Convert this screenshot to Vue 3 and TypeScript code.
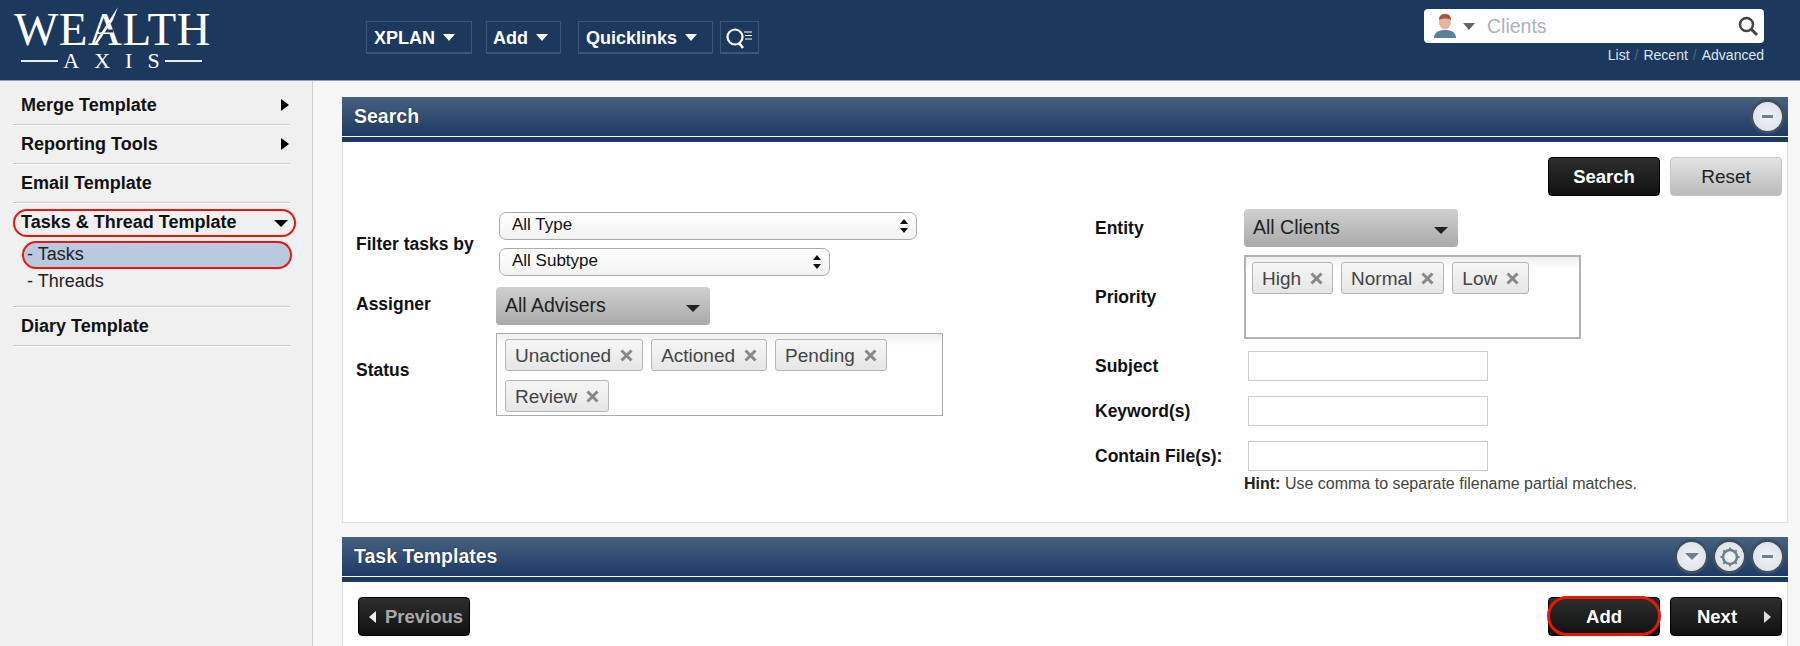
<script setup lang="ts">
const navItems = ['XPLAN', 'Add', 'Quicklinks']
const statusTags = ['Unactioned', 'Actioned', 'Pending', 'Review']
const priorityTags = ['High', 'Normal', 'Low']
</script>

<template>
  <div class="page">
    <header class="topbar">
      <div class="logo">
        <div class="logo-word">WEALTH</div>
        <svg class="logo-slash" width="60" height="50" viewBox="0 0 60 50">
          <path d="M7 41L34 2" stroke="#1c385c" stroke-width="0" fill="none" />
          <path d="M14 31h14" stroke="#1c385c" stroke-width="3" />
          <path d="M9 44L33 7l-5 13L12 44z" fill="#fff" />
        </svg>
        <div class="logo-sub"><i></i><span>AXIS</span><i></i></div>
      </div>
      <nav class="nav">
        <div v-for="n in navItems" :key="n" class="nav-btn" :class="'nav-' + n.toLowerCase()">
          {{ n }}<b class="caret-white"></b>
        </div>
        <div class="nav-icon">
          <svg width="30" height="26" viewBox="0 0 30 26" fill="none" stroke="#fff">
            <circle cx="10" cy="12" r="7.5" stroke-width="2.200" />
            <path d="M14 18l4 5" stroke-width="2.500" />
            <path d="M19 7h8M20 10.500h7M20 14h7" stroke-width="1" />
          </svg>
        </div>
      </nav>
      <div class="client-search">
        <div class="client-box">
          <svg class="person" width="24" height="26" viewBox="0 0 24 26">
            <path d="M1 25c0-6 5-8 11-8s11 2 11 8z" fill="#5c7f9e" />
            <ellipse cx="12" cy="9" rx="6" ry="7.500" fill="#e3b79b" />
            <path d="M6 7c0-5 3-6 6-6s6 1 6 6c-3-2-9-2-12 0z" fill="#a8553a" />
          </svg>
          <b class="caret-grey"></b>
          <span class="client-ph">Clients</span>
          <svg class="mag" width="22" height="22" viewBox="0 0 22 22" fill="none" stroke="#444">
            <circle cx="9.500" cy="9.500" r="6.500" stroke-width="2.500" />
            <path d="M14 14l6 6" stroke-width="3" />
          </svg>
        </div>
        <div class="client-links">
          <span>List</span><em>/</em><span>Recent</span><em>/</em><span>Advanced</span>
        </div>
      </div>
    </header>

    <div class="layout">
      <aside class="sidebar">
        <div class="side-item">Merge Template<b class="arrow-right"></b></div>
        <div class="side-item">Reporting Tools<b class="arrow-right"></b></div>
        <div class="side-item">Email Template</div>
        <div class="side-group">
          <div class="side-head">Tasks &amp; Thread Template<b class="arrow-down"></b></div>
          <div class="side-sub active">- Tasks</div>
          <div class="side-sub">- Threads</div>
        </div>
        <div class="side-item">Diary Template</div>
      </aside>

      <main class="content">
        <section class="panel">
          <div class="panel-head">
            <h2>Search</h2>
            <div class="round-btns"><span class="round"><i class="minus"></i></span></div>
          </div>
          <div class="panel-body">
            <div class="actions">
              <button class="btn dark">Search</button>
              <button class="btn light">Reset</button>
            </div>
            <div class="form">
              <div class="col-left">
                <div class="row filter-row">
                  <label>Filter tasks by</label>
                  <div class="selects">
                    <div class="native-select type-select">All Type<b class="updown"></b></div>
                    <div class="native-select subtype-select">All Subtype<b class="updown"></b></div>
                  </div>
                </div>
                <div class="row assigner-row">
                  <label>Assigner</label>
                  <div class="drop">All Advisers<b class="arrow-down small"></b></div>
                </div>
                <div class="row status-row">
                  <label>Status</label>
                  <div class="tagbox status-box">
                    <span v-for="t in statusTags" :key="t" class="tag">{{ t }}
                      <svg width="13" height="13" viewBox="0 0 13 13" stroke="#888" stroke-width="3"><path d="M1.500 1.500l10 10M11.500 1.500l-10 10" /></svg>
                    </span>
                  </div>
                </div>
              </div>
              <div class="col-right">
                <div class="row">
                  <label class="entity-label">Entity</label>
                  <div class="drop">All Clients<b class="arrow-down small"></b></div>
                </div>
                <div class="row priority-row">
                  <label>Priority</label>
                  <div class="tagbox priority-box">
                    <span v-for="t in priorityTags" :key="t" class="tag">{{ t }}
                      <svg width="13" height="13" viewBox="0 0 13 13" stroke="#888" stroke-width="3"><path d="M1.500 1.500l10 10M11.500 1.500l-10 10" /></svg>
                    </span>
                  </div>
                </div>
                <div class="row text-row subject-row">
                  <label>Subject</label>
                  <input type="text" />
                </div>
                <div class="row text-row keyword-row">
                  <label>Keyword(s)</label>
                  <input type="text" />
                </div>
                <div class="row text-row file-row">
                  <label>Contain File(s):</label>
                  <input type="text" />
                </div>
                <div class="hint"><b>Hint:</b> Use comma to separate filename partial matches.</div>
              </div>
            </div>
          </div>
        </section>

        <section class="panel second">
          <div class="panel-head">
            <h2>Task Templates</h2>
            <div class="round-btns">
              <span class="round"><i class="tri"></i></span>
              <span class="round">
                <svg width="22" height="22" viewBox="0 0 22 22" fill="none" stroke="#6f7f90" stroke-width="2.500">
                  <circle cx="11" cy="11" r="7" />
                  <path d="M11 1.500v2M11 18.500v2M1.500 11h2M18.500 11h2M4.300 4.300l1.400 1.400M16.300 16.300l1.400 1.400M4.300 17.700l1.400-1.400M16.300 5.700l1.400-1.400" stroke-width="2" />
                </svg>
              </span>
              <span class="round"><i class="minus"></i></span>
            </div>
          </div>
          <div class="panel-body pager">
            <button class="btn dark prev"><b class="tri-left"></b><span>Previous</span></button>
            <div class="pager-right">
              <button class="btn dark add-btn">Add</button>
              <button class="btn dark next">Next<b class="tri-right"></b></button>
            </div>
          </div>
        </section>
      </main>
    </div>
  </div>
</template>

<style>
html, body { margin: 0; background: #f5f5f5; }
</style>

<style scoped>
.page {
  width: 1800px;
  height: 646px;
  overflow: hidden;
  font-family: "Liberation Sans", Arial, sans-serif;
  color: #111;
  background: #f6f6f6;
}

/* top bar */
.topbar {
  height: 80px;
  background: #1c385c;
  border-bottom: 1px solid #8fa0b3;
  display: flex;
  position: relative;
}
.logo { width: 366px; padding: 9px 0 0 14px; box-sizing: border-box; color: #fff; font-family: "Liberation Serif", serif; position: relative; }
.logo-word { font-size: 47px; line-height: 40px; letter-spacing: 0.5px; font-weight: normal; }
.logo-slash { position: absolute; left: 85px; top: 0; }
.logo-sub { display: flex; align-items: center; gap: 5px; width: 181px; margin-left: 7px; margin-top: 1px; }
.logo-sub i { flex: 1; height: 2px; background: #e8ecf1; }
.logo-sub span { font-size: 22px; line-height: 22px; letter-spacing: 15px; margin-right: -15px; }
.nav { display: flex; padding-top: 21px; height: 33px; }
.nav-btn {
  height: 33px;
  box-sizing: border-box;
  border: 1px solid #3c5679;
  border-bottom-width: 2px;
  color: #fff;
  font-weight: bold;
  font-size: 18px;
  line-height: 30px;
  padding: 1px 7px 0;
  display: flex;
  align-items: center;
  white-space: nowrap;
}
.nav-xplan { width: 106px; }
.nav-add { width: 75px; margin-left: 14px; padding-left: 6px; }
.nav-quicklinks { width: 135px; margin-left: 17px; }
.caret-white { border: 6px solid transparent; border-top: 7px solid #fff; border-bottom: 0; margin-left: 8px; }
.nav-icon { width: 39px; height: 33px; margin-left: 7px; box-sizing: border-box; border: 1px solid #3c5679; border-bottom-width: 2px; padding: 3px 0 0 4px; }

.client-search { position: absolute; right: 36px; top: 9px; width: 340px; }
.client-box {
  height: 34px;
  box-sizing: border-box;
  background: #fff;
  border-radius: 4px;
  display: flex;
  align-items: center;
  padding: 0 5px 0 9px;
}
.caret-grey { border: 6px solid transparent; border-top: 7px solid #666; border-bottom: 0; margin: 0 12px 0 6px; }
.client-ph { flex: 1; color: #aab2bd; font-size: 19.500px; }
.client-links { text-align: right; color: #dfe6ee; font-size: 14px; line-height: 16px; margin-top: 4px; }
.client-links em { color: #4f6887; margin: 0 5px; font-style: normal; }

/* sidebar */
.layout { display: flex; height: 565px; }
.sidebar {
  width: 313px;
  box-sizing: border-box;
  background: #f0f0f0;
  border-right: 1px solid #cfcfcf;
  padding: 5px 0 0 13px;
}
.side-item {
  width: 277px;
  height: 39px;
  box-sizing: border-box;
  border-bottom: 1px solid #c9c9c9;
  box-shadow: 0 1px 0 #fff;
  font-weight: bold;
  font-size: 18px;
  line-height: 38px;
  padding-left: 8px;
  position: relative;
}
.side-group { width: 277px; height: 98px; box-sizing: border-box; border-bottom: 1px solid #c9c9c9; box-shadow: 0 1px 0 #fff; }
.side-head {
  height: 28px;
  margin-top: 6px;
  width: 283px;
  box-sizing: border-box;
  border: 2.500px solid #e8160c;
  border-radius: 14px;
  padding-left: 6px;
  margin-bottom: 4px;
  line-height: 23px;
  font-weight: bold;
  font-size: 18px;
  position: relative;
}
.side-sub { font-size: 18px; line-height: 24px; height: 24px; margin-left: 14px; color: #222; }
.side-sub.active {
  width: 270px;
  box-sizing: border-box;
  background: #b9c9e0;
  margin-left: 9px;
  border: 2.500px solid #e8160c;
  border-radius: 14px;
  padding-left: 3px;
  line-height: 23px;
  height: 28px;
}
.arrow-right { position: absolute; right: 1px; top: 13px; border: 6px solid transparent; border-left: 8px solid #000; border-right: 0; }
.arrow-down { position: absolute; right: 6px; top: 9px; border: 7px solid transparent; border-top: 7px solid #000; border-bottom: 0; }

/* panels */
.content { flex: 1; padding: 16px 12px 0 29px; min-width: 0; }
.panel.second { margin-top: 14px; }
.panel-head {
  height: 39px;
  background: linear-gradient(#47617f, #1d3a66);
  display: flex;
  align-items: center;
  justify-content: space-between;
  padding: 0 3px 0 12px;
  border-bottom: 1px solid #fff;
  box-shadow: 0 5px 0 #1d3a66;
  margin-bottom: 5px;
  position: relative;
}
.panel-head h2 { margin: 0; color: #fff; font-size: 19.500px; font-weight: bold; text-shadow: 0 0 1px #000; }
.round-btns { display: flex; gap: 3px; }
.round {
  width: 29px;
  height: 29px;
  border-radius: 50%;
  background: radial-gradient(#f1f3f6, #d8dee5);
  border: 3px solid #3f4e60;
  display: flex;
  align-items: center;
  justify-content: center;
}
.minus { width: 11px; height: 3px; background: #6f7f90; }
.tri { border: 7px solid transparent; border-top: 7px solid #6f7f90; border-bottom: 0; }

.panel-body {
  background: #fff;
  border: 1px solid #ddd;
  border-top: 0;
  height: 381px;
  box-sizing: border-box;
  padding: 15px 5px 0 13px;
}
.actions { display: flex; justify-content: flex-end; gap: 10px; }
.btn {
  width: 112px;
  height: 39px;
  border-radius: 4px;
  font-family: inherit;
  font-size: 18.500px;
  font-weight: bold;
  position: relative;
}
.btn.dark { background: linear-gradient(#2e2e2e, #111); border: 1px solid #000; color: #fff; }
.btn.light { background: linear-gradient(#e4e4e4, #bbb); border: 1px solid #c4c4c4; color: #222; font-weight: normal; font-size: 19px; }

.form { display: flex; margin-top: 13px; }
.col-left { width: 739px; padding-top: 3px; }
.col-right { flex: 1; }
.row { display: flex; align-items: center; }
.row label { font-weight: bold; font-size: 17.500px; color: #111; }
.col-left .row label { width: 140px; flex: none; }
.col-right .row label { width: 149px; flex: none; }
.native-select {
  height: 28px;
  box-sizing: border-box;
  border: 1px solid #aaa;
  border-radius: 7px;
  background: linear-gradient(#fff, #f2f2f2);
  font-size: 17px;
  line-height: 24px;
  padding-left: 12px;
  position: relative;
  margin-left: 3px;
}
.type-select { width: 418px; }
.subtype-select { width: 331px; margin-top: 8px; }
.updown { position: absolute; right: 8px; top: 6px; width: 8px; height: 14px; }
.updown::before, .updown::after { content: ""; position: absolute; left: 0; border: 4px solid transparent; }
.updown::before { top: 0; border-bottom: 5px solid #111; border-top: 0; }
.updown::after { bottom: 0; border-top: 5px solid #111; border-bottom: 0; }
.assigner-row { margin-top: 11px; }
.assigner-row label { margin-top: -3px; }
.status-row { margin-top: 8px; }
.status-row label { margin-top: -9px; }
.drop {
  width: 214px;
  height: 38px;
  box-sizing: border-box;
  background: linear-gradient(#d0d0d0, #a9a9a9);
  border-radius: 4px;
  font-size: 19.500px;
  line-height: 36px;
  padding-left: 9px;
  position: relative;
  color: #222;
}
.drop .small { right: 10px; top: 18px; border-width: 7px; border-bottom: 0; border-top-color: #222; }
.tagbox {
  box-sizing: border-box;
  border: 1px solid #aaa;
  background: linear-gradient(#eee, #fff 12px);
  padding: 5px 0 0 8px;
  display: flex;
  flex-wrap: wrap;
  align-content: flex-start;
  gap: 9px 8px;
}
.status-box { width: 447px; height: 83px; }
.priority-box { width: 337px; height: 84px; border: 2px solid #b3b3b3; padding: 5px 0 0 6px; }
.tag {
  height: 32px;
  box-sizing: border-box;
  border: 1px solid #b4b4b4;
  border-radius: 3px;
  background: linear-gradient(#f6f6f6, #e6e6e6);
  color: #444;
  font-size: 19px;
  line-height: 29px;
  padding: 0 9px;
  display: flex;
  align-items: center;
  gap: 9px;
}
.priority-row { margin-top: 8px; }
.text-row input {
  width: 240px;
  height: 30px;
  box-sizing: border-box;
  border: 1px solid #ccc;
  margin: 0 0 0 4px;
  padding: 0;
  background: #fff;
}
.subject-row { margin-top: 12px; }
.keyword-row { margin-top: 15px; }
.file-row { margin-top: 15px; }
.hint { font-size: 16px; color: #444; padding-left: 149px; margin-top: 4px; line-height: 18px; }
.hint b { color: #222; }

.pager { height: 70px; padding: 15px 5px 0 15px; display: flex; justify-content: space-between; }
.pager-right { display: flex; gap: 10px; }
.prev { color: #a9a9a9 !important; display: flex; align-items: center; padding: 0 0 0 10px; }
.prev span { margin-left: 9px; }
.tri-left { border: 6px solid transparent; border-right: 7px solid #eee; border-left: 0; }
.next { padding-right: 24px; }
.tri-right { position: absolute; right: 10px; top: 13px; border: 6px solid transparent; border-left: 7px solid #ddd; border-right: 0; }
.add-btn::after {
  content: "";
  position: absolute;
  inset: -2px -2px -1px -2px;
  border: 3px solid #e8160c;
  border-radius: 20px;
}
</style>
